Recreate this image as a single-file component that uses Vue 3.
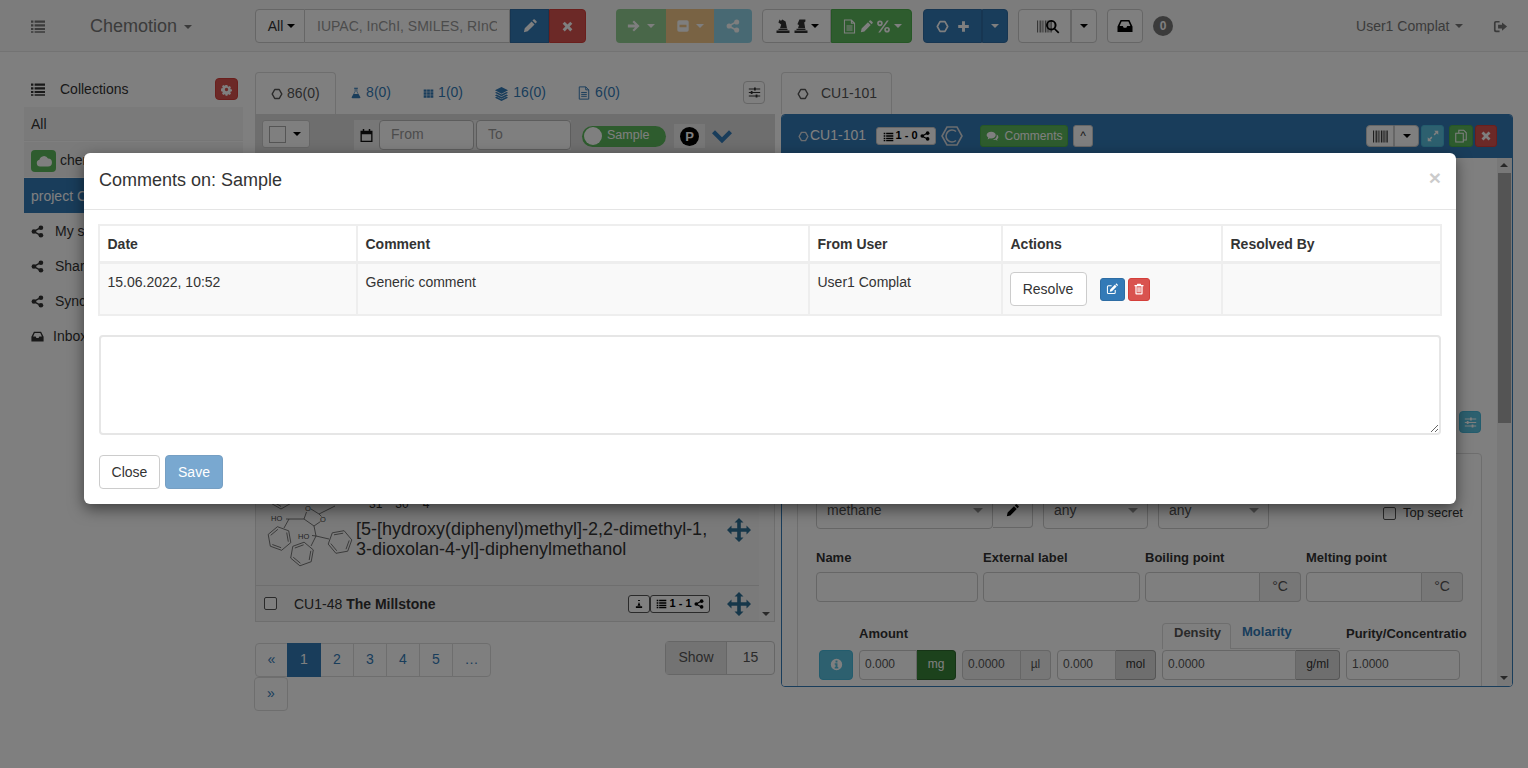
<script setup>
import { h } from 'vue'

const Ic = (props) =>
  h('svg', { class: 'i', viewBox: '0 0 16 16', width: props.s || 14, height: props.s || 14, fill: 'currentColor' }, [
    h('use', { href: '#' + props.n })
  ])
Ic.props = ['n', 's']

const hexPath = (cx, cy, r, rot) => {
  const p = (k, q) => {
    const a = ((rot + k * 60) * Math.PI) / 180
    return [cx + q * Math.cos(a), cy + q * Math.sin(a)].map((v) => v.toFixed(1)).join(' ')
  }
  let d = `M${p(0, r)}`
  for (let k = 1; k < 6; k++) d += `L${p(k, r)}`
  d += 'Z'
  for (let k = 0; k < 6; k += 2) d += `M${p(k, r * 0.78)}L${p(k + 1, r * 0.78)}`
  return d
}
const rings = [
  hexPath(279.5, 537.5, 12, 80),
  hexPath(302, 553, 12, 100),
  hexPath(340, 541, 12, 110),
  hexPath(281, 496, 12, 90)
]
const cols = ['Date', 'Comment', 'From User', 'Actions', 'Resolved By']
const pages = ['1', '2', '3', '4', '5', '…']
const sideRows = [
  { ic: 'share', t: 'My shared collections' },
  { ic: 'share', t: 'Shared with me' },
  { ic: 'share', t: 'Synchronized with me' },
  { ic: 'inbox', t: 'Inbox' }
]
const tabs = [
  { ic: 'flask', s: 12, t: '8(0)' },
  { ic: 'table', s: 11, t: '1(0)' },
  { ic: 'layers', s: 15, t: '16(0)' },
  { ic: 'file', s: 14, t: '6(0)' }
]
</script>

<template>
  <div class="page">
    <svg width="0" height="0" class="defs">
      <defs>
        <symbol id="list" viewBox="0 0 16 16"><path d="M1 2.5h2.4v2.2H1zM4.6 2.5H15v2.2H4.6zM1 6.2h2.4v2.2H1zM4.6 6.2H15v2.2H4.6zM1 9.9h2.4v2.2H1zM4.6 9.9H15v2.2H4.6zM1 13.2h2.4v1.6H1zM4.6 13.2H15v1.6H4.6z" /></symbol>
        <symbol id="pencil" viewBox="0 0 16 16"><path d="M1 15l1-4.4 7.8-7.8 3.4 3.4L5.4 14zM10.8 1.8L12 .6a1 1 0 0 1 1.4 0l2 2a1 1 0 0 1 0 1.4l-1.2 1.2z" /></symbol>
        <symbol id="times" viewBox="0 0 16 16"><path d="M4.6 2L8 5.4 11.4 2 14 4.6 10.6 8 14 11.4 11.4 14 8 10.6 4.6 14 2 11.4 5.4 8 2 4.6z" /></symbol>
        <symbol id="arrow" viewBox="0 0 16 16"><path d="M1 6.4h8.2L6.2 3.4 8 1.6 14.4 8 8 14.4l-1.8-1.8 3-3H1z" /></symbol>
        <symbol id="minus" viewBox="0 0 16 16"><path fill-rule="evenodd" d="M3.5 1.5h9a2 2 0 0 1 2 2v9a2 2 0 0 1-2 2h-9a2 2 0 0 1-2-2v-9a2 2 0 0 1 2-2zM4 6.6v2.8h8V6.6z" /></symbol>
        <symbol id="share" viewBox="0 0 16 16"><circle cx="3.6" cy="8" r="2.9" /><circle cx="12.2" cy="3.4" r="2.9" /><circle cx="12.2" cy="12.6" r="2.9" /><path d="M3 7l8.6-4.6.8 1.6L4 8.6zM4 7.4l8.4 4.6-.8 1.6L3 9z" /></symbol>
        <symbol id="hex" viewBox="0 0 16 16"><path fill="none" stroke="currentColor" stroke-width="2" stroke-linejoin="round" d="M5 2h6l3.4 6L11 14H5L1.6 8z" /></symbol>
        <symbol id="flask" viewBox="0 0 16 16"><path fill-rule="evenodd" d="M5.5 1h5v1.4h-.8v3.8l4 7.2c.5 1 0 1.6-1 1.6H3.3c-1 0-1.5-.6-1-1.6l4-7.2V2.4h-.8zM5.4 9.4h5.2L8.7 6V2.4H7.3V6z" /></symbol>
        <symbol id="table" viewBox="0 0 16 16"><path d="M1 2h4.2v3.4H1zM6 2h4v3.4H6zM10.8 2H15v3.4h-4.2zM1 6.2h4.2v3.6H1zM6 6.2h4v3.6H6zM10.8 6.2H15v3.6h-4.2zM1 10.6h4.2V14H1zM6 10.6h4V14H6zM10.8 10.6H15V14h-4.2z" /></symbol>
        <symbol id="layers" viewBox="0 0 16 16"><path d="M8 1l7 3.6L8 8.2 1 4.6zM1 7.2l1.8-.9L8 9l5.2-2.7 1.8.9L8 10.8zM1 10l1.8-.9L8 11.8l5.2-2.7L15 10l-7 3.6z" /><path d="M1 12.4l1.8-.9L8 14.2l5.2-2.7 1.8.9L8 16z" /></symbol>
        <symbol id="file" viewBox="0 0 16 16"><path fill="none" stroke="currentColor" stroke-width="1.1" d="M2.6 1H10l3.4 3.4V15H2.6zM10 1v3.4h3.4M4.8 7.4h6.4M4.8 9.6h6.4M4.8 11.8h6.4" /></symbol>
        <symbol id="cog" viewBox="0 0 16 16"><path fill-rule="evenodd" d="M6.6 1h2.8l.4 2 1.4.6 1.7-1.1 2 2-1.1 1.7.6 1.4 2 .4v2.8l-2 .4-.6 1.4 1.1 1.7-2 2-1.7-1.1-1.4.6-.4 2H6.6l-.4-2-1.4-.6-1.7 1.1-2-2 1.1-1.7-.6-1.4-2-.4V6.6l2-.4.6-1.4-1.1-1.7 2-2 1.7 1.1 1.4-.6zM8 5.4a2.6 2.6 0 1 0 0 5.2 2.6 2.6 0 0 0 0-5.2z" transform="translate(1.6 1.6) scale(.8)" /></symbol>
        <symbol id="cal" viewBox="0 0 16 16"><path fill-rule="evenodd" d="M4 1h1.6v2H10.4V1H12v2h2.4v12H1.6V3H4zM3 6.6V13.6h10V6.6z" /></symbol>
        <symbol id="cloud" viewBox="0 0 16 16"><path d="M4 13.5a3.4 3.4 0 0 1-.6-6.7A4.6 4.6 0 0 1 12 5.6a3.9 3.9 0 0 1 0 7.9z" /></symbol>
        <symbol id="inbox" viewBox="0 0 16 16"><path fill-rule="evenodd" d="M3.6 2h8.8L15.5 8.4V14H.5V8.4zM4.6 3.6L2.6 8h3.2l.9 1.8h2.6l.9-1.8h3.2l-2-4.4z" /></symbol>
        <symbol id="signout" viewBox="0 0 16 16"><path fill-rule="evenodd" d="M3 2h4v1.8H3.6a.8.8 0 0 0-.8.8v6.8c0 .4.4.8.8.8H7V14H3a2 2 0 0 1-2-2V4a2 2 0 0 1 2-2zM9.6 3.6L15 8l-5.4 4.4V10H5.4V6h4.2z" /></symbol>
        <symbol id="barcode" viewBox="0 0 16 16"><path d="M0 1.5h1v13H0zM2 1.5h.6v13H2zM3.4 1.5h1.2v13H3.4zM5.4 1.5H6v13h-.6zM7 1.5h.6v13H7zM8.6 1.5h1.4v13H8.6zM10.8 1.5h.6v13h-.6zM12.2 1.5h1v13h-1zM14 1.5h.6v13H14zM15.2 1.5h.8v13h-.8z" /></symbol>
        <symbol id="search" viewBox="0 0 16 16"><path fill-rule="evenodd" d="M6.6 1a5.6 5.6 0 0 1 4.5 9l4.2 4.2-1.3 1.3-4.2-4.2A5.6 5.6 0 1 1 6.6 1zm0 2a3.6 3.6 0 1 0 0 7.2 3.6 3.6 0 0 0 0-7.2z" /></symbol>
        <symbol id="edit" viewBox="0 0 16 16"><path d="M7.5 3H3.2A2 2 0 0 0 1.2 5v7.8a2 2 0 0 0 2 2H11a2 2 0 0 0 2-2V9.4h-1.4v3.2c0 .5-.4.8-.8.8H3.4a.8.8 0 0 1-.8-.8V5.2c0-.4.4-.8.8-.8h4.1zM5 11.6l.6-3L11.8 2.4l2.4 2.4L8 11zM12.6 1.6l.7-.7c.3-.3.8-.3 1.1 0l1.3 1.3c.3.3.3.8 0 1.1l-.7.7z" /></symbol>
        <symbol id="trash" viewBox="0 0 16 16"><path fill-rule="evenodd" d="M5.8 1h4.4l.8 1.8h3v1.6h-1.2V14a1.2 1.2 0 0 1-1.2 1.2H4.4A1.2 1.2 0 0 1 3.2 14V4.4H2V2.8h3zM4.8 4.4V13.6h6.4V4.4zM6 5.8h1v6.6H6zM7.5 5.8h1v6.6h-1zM9 5.8h1v6.6H9z" /></symbol>
        <symbol id="move" viewBox="0 0 16 16"><path d="M8 0l3 3H9.2v3.8H13V5l3 3-3 3V9.2H9.2V13H11l-3 3-3-3h1.8V9.2H3V11L0 8l3-3v1.8h3.8V3H5z" /></symbol>
        <symbol id="chev" viewBox="0 0 16 16"><path d="M2.4 3.4L8 9l5.6-5.6L16 5.8l-8 8-8-8z" /></symbol>
        <symbol id="sliders" viewBox="0 0 16 16"><path d="M1 3h6.4V1.8h2.2V3H15v1.4H9.6v1.2H7.4V4.4H1zM1 7.3h2.4V6.1h2.2v1.2H15v1.4H5.6v1.2H3.4V8.7H1zM1 11.6h8.4v-1.2h2.2v1.2H15V13h-3.4v1.2H9.4V13H1z" /></symbol>
        <symbol id="comments" viewBox="0 0 16 16"><path d="M6.4 2C9.6 2 12 3.8 12 6.2s-2.4 4.2-5.6 4.2c-.6 0-1.1 0-1.6-.2L2 11.6l.8-2.4C1.6 8.4.8 7.4.8 6.2.8 3.8 3.2 2 6.4 2z" /><path d="M13 5.6c1.4.7 2.2 1.8 2.2 3 0 1.1-.6 2-1.6 2.7l.6 2-2.4-1.2c-1 .2-2.6.2-3.6-.4 2.6-.2 4.8-2 5-4.4z" /></symbol>
        <symbol id="expand" viewBox="0 0 16 16"><path d="M15 1v5.4l-2-2-2.8 2.8-1.4-1.4L11.6 3l-2-2zM1 15V9.6l2 2 2.8-2.8 1.4 1.4L4.4 13l2 2z" /></symbol>
        <symbol id="copy" viewBox="0 0 16 16"><path fill="none" stroke="currentColor" stroke-width="1.2" d="M5.5 4.8V1.4h5.6l2.9 2.9v8.3h-3.5M2 4.8h8.6v10H2z" /></symbol>
        <symbol id="info" viewBox="0 0 16 16"><path fill-rule="evenodd" d="M8 1a7 7 0 1 1 0 14A7 7 0 0 1 8 1zM6.8 3v2.4h2.4V3zM5.8 6.6v1.6h1v3H5.8v1.6h4.4v-1.6h-1V6.6z" /></symbol>
        <symbol id="rxa" viewBox="0 0 16 16"><path d="M1.5 12.6h13V15h-13zM3.5 10.8h9v1.2h-9zM5 10.2l1.2-3.8L3.4 4.6 4.6 1.6 6 3 7.2 1.4l3.4 2.2 1.4 6.6z" /></symbol>
        <symbol id="rxb" viewBox="0 0 16 16"><path d="M1.5 12.6h13V15h-13zM3.5 10.8h9v1.2h-9zM5 10.2l1-3.2-1.6-.8L6.4 1.6h6v2l-1.2 1 1 5.6z" /></symbol>
        <symbol id="percent" viewBox="0 0 16 16"><path fill-rule="evenodd" d="M4.2 1.6a3 3 0 1 1 0 6 3 3 0 0 1 0-6zm0 1.8a1.2 1.2 0 1 0 0 2.4 1.2 1.2 0 0 0 0-2.4zM11.8 8.4a3 3 0 1 1 0 6 3 3 0 0 1 0-6zm0 1.8a1.2 1.2 0 1 0 0 2.4 1.2 1.2 0 0 0 0-2.4zM11.6 1.6h2L4.4 14.4h-2z" /></symbol>
        <symbol id="plus" viewBox="0 0 16 16"><path d="M6.2 1.5h3.6v4.7h4.7v3.6H9.8v4.7H6.2V9.8H1.5V6.2h4.7z" /></symbol>
        <symbol id="tuser" viewBox="0 0 16 16"><path d="M8 4.6L10.4 10.8H5.6zM6.6 1.6h2.8v1.4H6.6zM3 11.6h10v2.6H3z" /></symbol>
      </defs>
    </svg>

    <header class="nav">
      <Ic n="list" s="16" class="nav-list" />
      <span class="brand">Chemotion</span><span class="caret brand-caret"></span>

      <div class="grp search">
        <button class="btn all">All <span class="caret dark"></span></button>
        <input class="search-in" placeholder="IUPAC, InChI, SMILES, RInChI" />
        <button class="btn primary s39"><Ic n="pencil" s="14" /></button>
        <button class="btn danger s37"><Ic n="times" s="13" /></button>
      </div>

      <div class="grp g-ops">
        <button class="btn success off w50"><Ic n="arrow" s="14" /><span class="caret"></span></button>
        <button class="btn warning off w48"><Ic n="minus" s="14" /><span class="caret"></span></button>
        <button class="btn info off w38"><Ic n="share" s="14" /></button>
      </div>

      <div class="grp g-gen">
        <button class="btn w69"><Ic n="rxa" s="16" /><Ic n="rxb" s="16" /><span class="caret dark"></span></button>
        <button class="btn success w81"><Ic n="file" s="15" /><Ic n="pencil" s="13" /><Ic n="percent" s="15" /><span class="caret"></span></button>
      </div>

      <div class="grp g-add">
        <button class="btn primary w59"><Ic n="hex" s="13" /><Ic n="plus" s="13" /></button>
        <button class="btn primary w26"><span class="caret"></span></button>
      </div>

      <div class="grp g-bar">
        <button class="btn w53 barq"><Ic n="barcode" s="15" class="bc" /><Ic n="search" s="15" class="mag" /></button>
        <button class="btn w26"><span class="caret dark"></span></button>
      </div>

      <button class="btn w36 solo"><Ic n="inbox" s="16" /></button>
      <span class="badge">0</span>

      <span class="user">User1 Complat</span><span class="caret user-caret"></span>
      <Ic n="signout" s="15" class="signout" />
    </header>

    <main class="main">
      <aside class="side">
        <div class="side-head">
          <Ic n="list" s="16" />
          <span class="side-title">Collections</span>
          <button class="btn danger cog"><Ic n="cog" s="13" /></button>
        </div>
        <div class="side-row all-row">All</div>
        <div class="side-row chem-row"><span class="cloud"><Ic n="cloud" s="16" /></span>chemotion-repository.net</div>
        <div class="side-row proj-row">project Complat</div>
        <div v-for="r in sideRows" :key="r.t" class="side-row plain">
          <Ic :n="r.ic" s="13" /><span>{{ r.t }}</span>
        </div>
      </aside>

      <section class="center">
        <div class="tabs">
          <div class="tab active"><Ic n="hex" s="12" /><span>86(0)</span></div>
          <div v-for="t in tabs" :key="t.ic" class="tab" :class="'t-' + t.ic">
            <Ic :n="t.ic" :s="t.s" /><span>{{ t.t }}</span>
          </div>
          <button class="btn tune"><Ic n="sliders" s="13" /></button>
        </div>

        <div class="toolbar">
          <div class="check-dd"><span class="chk-box"></span><span class="caret dark"></span></div>
          <div class="date-grp">
            <span class="cal"><Ic n="cal" s="15" /></span>
            <span class="fake-in">From</span>
            <span class="fake-in to">To</span>
          </div>
          <div class="toggle"><span class="knob"></span><span>Sample</span></div>
          <span class="pbox"><span class="pcirc">P</span></span>
          <Ic n="chev" s="20" class="chev" />
        </div>

        <div class="list">
          <div class="list-main">
            <div class="mol-row">
              <svg class="mol" width="95" height="105" viewBox="262 480 95 105" fill="none" stroke="#555" stroke-width=".8">
                <path v-for="d in rings" :key="d" :d="d" />
                <path d="M284 527L289 518L304 518L306.5 511M311 508L319 513L321.5 515.5M320.5 520.5L314 525L304 518M314 525L316 535L329 538M316 535L311 545M316 535L312 534.5M289 518L286 518M319 513L335 505" />
                <text x="271" y="520" class="lbl">HO</text>
                <text x="298" y="538" class="lbl">HO</text>
                <text x="305" y="510" class="lbl">O</text>
                <text x="320" y="521" class="lbl">O</text>
              </svg>
              <div class="mol-text">
                <div class="formula">C<sub>31</sub>H<sub>30</sub>O<sub>4</sub></div>
                <div class="iupac">[5-[hydroxy(diphenyl)methyl]-2,2-dimethyl-1,<br />3-dioxolan-4-yl]-diphenylmethanol</div>
              </div>
              <Ic n="move" s="24" class="move mv1" />
            </div>
            <div class="item-row">
              <span class="cb"></span>
              <span class="item-name">CU1-48 <b>The Millstone</b></span>
              <span class="tag flask-tag"><Ic n="tuser" s="10" /></span>
              <span class="tag list-tag"><Ic n="list" s="11" />1 - 1<Ic n="share" s="10" /></span>
              <Ic n="move" s="24" class="move" />
            </div>
          </div>
          <div class="list-scroll"><span class="arr-down"></span></div>
        </div>

        <div class="foot">
          <div class="pager">
            <span class="pg first">«</span>
            <span v-for="(p, idx) in pages" :key="p" class="pg" :class="{ cur: idx === 0, wide: p === '…' }">{{ p }}</span>
            <span class="pg last">»</span>
          </div>
          <div class="show"><span class="show-l">Show</span><span class="show-v">15</span></div>
        </div>
      </section>

      <section class="right">
        <div class="tabs">
          <div class="tab active rtab"><Ic n="hex" s="12" /><span>CU1-101</span></div>
        </div>
        <div class="panel">
          <div class="panel-head">
            <Ic n="hex" s="11" class="ph-hex" />
            <span class="ph-title">CU1-101</span>
            <span class="tag head-tag"><Ic n="list" s="11" />1 - 0<Ic n="share" s="10" /></span>
            <svg class="chem-hex" width="22" height="20" viewBox="0 0 22 20" fill="none" stroke="#d6dbe0" stroke-width="1.6"><path d="M6 1h10l5 9-5 9H6L1 10z" /><path d="M15 5.5A6 6 0 1 0 15 14.5" /></svg>
            <button class="btn success mini comm"><Ic n="comments" s="13" /><span>Comments</span></button>
            <button class="btn mini up">^</button>
            <div class="grp ph-bar">
              <button class="btn mini w28"><Ic n="barcode" s="15" /></button>
              <button class="btn mini w25"><span class="caret dark"></span></button>
            </div>
            <button class="btn info mini w23"><Ic n="expand" s="12" /></button>
            <button class="btn success mini w24 cp"><Ic n="copy" s="14" /></button>
            <button class="btn danger mini w22"><Ic n="times" s="12" /></button>
          </div>

          <div class="panel-body">
            <div class="content">
              <div class="tune-row"><button class="btn info tune2"><Ic n="sliders" s="13" /></button></div>
              <div class="box">
                <div class="r-type">
                  <span class="sel w177">methane<i class="caret grey"></i></span>
                  <span class="pen"><Ic n="pencil" s="13" /></span>
                  <span class="sel w105">any<i class="caret grey"></i></span>
                  <span class="sel w111">any<i class="caret grey"></i></span>
                  <label class="secret"><span class="cb"></span>Top secret</label>
                </div>
                <div class="r-labels">
                  <label class="w167">Name</label>
                  <label class="w162">External label</label>
                  <label class="w161">Boiling point</label>
                  <label>Melting point</label>
                </div>
                <div class="r-inputs">
                  <span class="ctl w162"></span>
                  <span class="ctl w157"></span>
                  <span class="ig w156"><span class="ctl fx"></span><span class="addon">°C</span></span>
                  <span class="ig w157"><span class="ctl fx"></span><span class="addon">°C</span></span>
                </div>
                <div class="r-amount-l">
                  <label class="amt">Amount</label>
                  <div class="dtabs"><span class="dtab on">Density</span><span class="dtab link">Molarity</span></div>
                  <label class="pur">Purity/Concentration</label>
                </div>
                <div class="r-amount">
                  <button class="btn info infob"><Ic n="info" s="13" /></button>
                  <span class="ig w97"><span class="ctl fx">0.000</span><span class="addon grn">mg</span></span>
                  <span class="ig w88 dis"><span class="ctl fx">0.0000</span><span class="addon">µl</span></span>
                  <span class="ig w99"><span class="ctl fx">0.000</span><span class="addon gr2">mol</span></span>
                  <span class="ig w178"><span class="ctl fx">0.0000</span><span class="addon gr2">g/ml</span></span>
                  <span class="ctl w114">1.0000</span>
                </div>
              </div>
            </div>
            <div class="vscroll"><span class="arr-up"></span><span class="thumb"></span><span class="fill"></span><span class="arr-dn"></span></div>
          </div>
        </div>
      </section>
    </main>

    <div class="backdrop"></div>
    <div class="modal-wrap">
      <div class="modal">
        <div class="m-head">
          <h4>Comments on: Sample</h4>
          <span class="m-close">×</span>
        </div>
        <div class="m-body">
          <table class="tbl">
            <thead>
              <tr><th v-for="c in cols" :key="c">{{ c }}</th></tr>
            </thead>
            <tbody>
              <tr>
                <td>15.06.2022, 10:52</td>
                <td>Generic comment</td>
                <td>User1 Complat</td>
                <td class="act">
                  <button class="btn res">Resolve</button>
                  <button class="btn primary xs ed"><Ic n="edit" s="12" /></button>
                  <button class="btn danger xs tr"><Ic n="trash" s="12" /></button>
                </td>
                <td></td>
              </tr>
            </tbody>
          </table>
          <textarea class="ta"></textarea>
          <div class="m-actions">
            <button class="btn close-b">Close</button>
            <button class="btn primary off save">Save</button>
          </div>
        </div>
      </div>
    </div>
  </div>
</template>

<style>
html, body { margin: 0; height: 100%; overflow: hidden; background: #fff; }
</style>

<style scoped>
* { box-sizing: border-box; }
.defs { position: absolute; }
.page { position: relative; width: 1528px; height: 768px; overflow: hidden; font: 14px/1.42857 "Liberation Sans", Arial, sans-serif; color: #333; background: #fff; }
.i { display: block; flex: none; }

.btn { display: inline-flex; align-items: center; justify-content: center; gap: 4px; height: 34px; padding: 0; font: 14px "Liberation Sans", sans-serif; color: #333; background: #fff; border: 1px solid #ccc; border-radius: 4px; }
.primary { background: #337ab7; border-color: #2e6da4; color: #fff; }
.danger { background: #d9534f; border-color: #d43f3a; color: #fff; }
.success { background: #5cb85c; border-color: #4cae4c; color: #fff; }
.warning { background: #f0ad4e; border-color: #eea236; color: #fff; }
.info { background: #5bc0de; border-color: #46b8da; color: #fff; }
.off { opacity: .65; }
.caret { display: inline-block; width: 0; height: 0; border-top: 4px solid; border-left: 4px solid transparent; border-right: 4px solid transparent; }
.caret.dark { color: #000; }
.grp { display: flex; flex: none; }
.grp .btn { border-radius: 0; }
.grp .btn:first-child { border-radius: 4px 0 0 4px; }
.grp .btn:last-child { border-radius: 0 4px 4px 0; }

.nav { display: flex; align-items: center; height: 52px; padding: 1px 0 0 30px; background: #f8f8f8; border-bottom: 1px solid #e7e7e7; }
.nav-list { color: #777; }
.brand { margin: 2px 0 0 44px; font-size: 18px; color: #777; }
.brand-caret { margin-left: 7px; color: #777; margin-top: 2px; }
.search { margin-left: 63px; height: 34px; }
.all { width: 50px; gap: 4px; padding-left: 3px; }
.search-in { width: 205px; height: 34px; padding: 0 12px; font: 14px "Liberation Sans", sans-serif; border: 1px solid #ccc; border-left: 0; outline: 0; background: #fff; color: #555; }
.search-in::placeholder { color: #999; opacity: 1; }
.s39 { width: 39px; }
.s37 { width: 37px; }
.g-ops { margin-left: 30px; }
.w50 { width: 50px; } .w48 { width: 48px; } .w38 { width: 38px; }
.g-ops .btn { border: 0; gap: 6px; }
.g-gen { margin-left: 10px; }
.w69 { width: 69px; gap: 2px; } .w81 { width: 81px; gap: 3px; }
.g-add { margin-left: 11px; }
.w59 { width: 59px; gap: 8px; } .w26 { width: 26px; }
.g-bar { margin-left: 10px; }
.w53 { width: 53px; }
.barq { gap: 0; padding-left: 8px; }
.bc { color: #666; margin-right: -7px; }
.mag { color: #000; }
.solo { width: 36px; margin-left: 10px; color: #000; }
.badge { margin-left: 10px; min-width: 20px; height: 20px; padding: 0 6px; border-radius: 10px; background: #777; color: #fff; font-size: 12px; font-weight: 700; line-height: 20px; text-align: center; }
.user { margin: 2px 0 0 183px; color: #777; }
.user-caret { margin-left: 6px; color: #777; }
.signout { margin-left: 30px; color: #777; }

.main { display: flex; align-items: flex-start; padding: 20px 0 0 24px; }
.side { flex: none; width: 219px; }
.side-head { display: flex; align-items: center; height: 35px; padding: 0 5px 1px 6px; }
.side-title { margin-left: 14px; flex: 1; padding-top: 1px; }
.cog { width: 23px; height: 22px; }
.side-row { display: flex; align-items: center; height: 35px; margin-bottom: 1px; padding: 2px 0 0 7px; white-space: nowrap; overflow: hidden; }
.all-row { height: 34px; background: #f5f5f5; border-bottom: 1px solid #eee; }
.chem-row { background: #f5f5f5; }
.cloud { display: flex; align-items: center; justify-content: center; width: 25px; height: 22px; margin-right: 4px; background: #5cb85c; color: #fff; border-radius: 4px; }
.proj-row { background: #337ab7; color: #fff; }
.plain { gap: 11px; margin: 0; padding-top: 0; }
.plain:last-child { gap: 9px; }

.center { flex: none; width: 520px; margin-left: 12px; }
.tabs { display: flex; align-items: center; height: 42px; }
.tab { display: flex; align-items: center; gap: 4px; height: 42px; padding: 0 15px; color: #337ab7; white-space: nowrap; }
.tab.active { color: #555; background: #fff; border: 1px solid #ddd; border-bottom: 0; border-radius: 4px 4px 0 0; padding: 0 15px; width: 81px; }
.t-flask { width: 55px; justify-content: flex-end; padding: 0; }
.t-table { width: 72px; justify-content: flex-end; padding: 0; }
.t-layers { width: 83px; justify-content: flex-end; padding: 0; }
.t-file { width: 74px; justify-content: flex-end; padding: 0; }
.tune { width: 22px; height: 23px; margin: 0 10px 1px auto; }
.tab.rtab { width: 111px; gap: 12px; padding: 0 10px 0 15px; }

.toolbar { position: relative; display: flex; align-items: center; height: 39px; padding: 0 0 0 7px; background: #ddd; }
.check-dd { display: flex; align-items: center; width: 48px; height: 28px; margin-top: 1px; padding-left: 6px; gap: 7px; background: #fff; border: 1px solid #ccc; border-radius: 3px; }
.chk-box { width: 17px; height: 17px; border: 1px solid #aaa; background: #fff; }
.date-grp { display: flex; height: 30px; margin: 3px 0 0 44px; background: #eee; }
.cal { display: flex; align-items: center; justify-content: center; width: 25px; color: #111; }
.fake-in { display: flex; align-items: center; width: 95px; padding-left: 11px; background: #fff; border: 1px solid #bbb; border-radius: 4px; font-size: 14px; color: #999; }
.fake-in.to { margin-left: 2px; }
.toggle { display: flex; align-items: center; gap: 5px; width: 84px; height: 21px; margin: 5px 0 0 11px; padding-left: 2px; background: #5cb85c; border-radius: 11px; color: #fff; font-size: 12.5px; }
.knob { width: 18px; height: 18px; border-radius: 50%; background: #fff; }
.pbox { display: flex; align-items: center; justify-content: center; width: 31px; height: 24px; margin: 5px 0 0 8px; background: #eee; }
.pcirc { width: 19px; height: 19px; border-radius: 50%; background: #000; color: #fff; font-size: 13px; font-weight: 700; line-height: 19px; text-align: center; }
.chev { margin: 4px 0 0 7px; color: #337ab7; }

.list { display: flex; height: 469px; border: 1px solid #ddd; border-top: 0; background: #fff; }
.list-main { flex: 1; display: flex; flex-direction: column; justify-content: flex-end; }
.list-scroll { position: relative; width: 15px; background: #f8f8f8; }
.arr-down { position: absolute; bottom: 5px; left: 3px; border-top: 4px solid #555; border-left: 4px solid transparent; border-right: 4px solid transparent; }
.mol-row { display: flex; height: 105px; background: #f5f5f5; border-bottom: 1px solid #ddd; }
.mol { margin-left: 6px; flex: none; }
.lbl { font: 7.5px "Liberation Sans", sans-serif; fill: #444; stroke: none; }
.mol-text { width: 370px; margin-left: -1px; padding-top: 7px; font-size: 18px; line-height: 19.6px; }
.formula { height: 32px; }
.formula sub { font-size: 12px; line-height: 0; }
.iupac { white-space: nowrap; }
.move { color: #2d6f94; }
.mv1 { margin: 37px 0 0 1px; }
.item-row { display: flex; align-items: center; height: 35px; padding: 0 8px; background: #f5f5f5; }
.cb { display: inline-block; width: 13px; height: 13px; flex: none; background: #fff; border: 1px solid #555; border-radius: 2px; }
.item-name { flex: 1; margin: 2px 0 0 17px; }
.tag { display: inline-flex; align-items: center; justify-content: center; gap: 2px; height: 18px; font-size: 11px; font-weight: 700; color: #000; background: #fff; border: 1px solid #555; border-radius: 3px; }
.flask-tag { width: 22px; }
.list-tag { width: 60px; margin-right: 17px; }
.foot { display: flex; justify-content: space-between; margin-top: 19px; align-items: flex-start; }
.pager { display: flex; flex-wrap: wrap; width: 240px; padding-top: 2px; }
.pg { display: flex; align-items: center; justify-content: center; width: 34px; height: 34px; color: #337ab7; background: #fff; border: 1px solid #ddd; margin-left: -1px; }
.pg.first { width: 33px; margin-left: 0; border-radius: 4px 0 0 4px; }
.pg.cur { width: 34px; position: relative; background: #337ab7; border-color: #337ab7; color: #fff; }
.pg.wide { width: 39px; border-radius: 0 4px 4px 0; }
.pg.last { margin-left: -1px; border-radius: 4px; font-size: 14px; }
.show { display: flex; width: 110px; height: 34px; border: 1px solid #ccc; border-radius: 4px; }
.show-l { display: flex; align-items: center; justify-content: center; width: 61px; background: #e6e6e6; border-right: 1px solid #ccc; color: #555; }
.show-v { flex: 1; display: flex; align-items: center; justify-content: center; color: #555; }

.right { flex: none; width: 732px; margin-left: 6px; }
.panel { height: 573px; border: 1px solid #337ab7; border-radius: 4px; overflow: hidden; display: flex; flex-direction: column; }
.panel-head { display: flex; align-items: center; flex: none; height: 43px; padding: 0 15px 1px 16px; background: #337ab7; color: #fff; }
.ph-hex { color: #d6dbe0; }
.ph-title { margin-left: 1px; }
.head-tag { width: 60px; margin-left: 10px; background: #fff; border-color: #ccc; }
.chem-hex { margin-left: 5px; }
.mini { height: 22px; font-size: 12px; border-radius: 3px; }
.comm { width: 88px; margin-left: 17px; gap: 6px; }
.up { width: 20px; margin-left: 5px; font-size: 12px; color: #333; }
.ph-bar { margin-left: auto; }
.w28 { width: 28px; } .w25 { width: 25px; }
.w23 { width: 23px; margin-left: 2px; }
.w24 { width: 24px; margin-left: 5px; }
.cp { background: #5cb85c; }
.w22 { width: 22px; margin-left: 2px; }

.panel-body { flex: 1; display: flex; min-height: 0; background: #fff; }
.content { flex: 1; min-width: 0; overflow: hidden; padding-left: 15px; }
.tune-row { display: flex; justify-content: flex-end; height: 295px; padding: 253px 16px 0 0; }
.tune2 { width: 22px; height: 22px; }
.box { width: 685px; height: 300px; padding-left: 18px; border: 1px solid #ddd; border-radius: 4px 4px 0 0; }
.r-type { display: flex; align-items: flex-start; height: 100px; padding-top: 39px; }
.sel { position: relative; display: flex; align-items: center; height: 36px; padding-left: 10px; background: #fff; border: 1px solid #ccc; border-radius: 4px; color: #555; }
.caret.grey { position: absolute; right: 9px; top: 14px; color: #999; border-top-width: 5px; border-left-width: 5px; border-right-width: 5px; }
.w177 { width: 177px; } .w105 { width: 105px; margin-left: 10px; } .w111 { width: 111px; margin-left: 10px; }
.pen { display: flex; align-items: center; justify-content: center; width: 40px; height: 35px; background: #fff; border: 1px solid #ccc; border-left: 0; border-radius: 0 4px 4px 0; color: #000; }
.secret { display: flex; align-items: center; gap: 7px; margin: 11px 0 0 114px; font-size: 13px; color: #333; }
.r-labels { display: flex; height: 19px; font-size: 13px; font-weight: 700; align-items: center; margin-top: -5px; }
.r-labels label { flex: none; }
.w167 { width: 167px; } .w162 { width: 162px; } .w161 { width: 161px; }
.r-inputs { display: flex; gap: 5px; height: 30px; margin-top: 4px; }
.ctl { display: flex; align-items: center; height: 30px; padding-left: 5px; background: #fff; border: 1px solid #ccc; border-radius: 4px; font-size: 12px; color: #555; flex: none; }
.w157 { width: 157px; } .w156 { width: 156px; }
.ig { display: flex; flex: none; height: 30px; }
.ig .ctl { border-radius: 4px 0 0 4px; }
.fx { flex: 1; min-width: 0; }
.addon { display: flex; align-items: center; justify-content: center; padding: 0 10px; background: #eee; border: 1px solid #ccc; border-left: 0; border-radius: 0 4px 4px 0; font-size: 12px; color: #555; }
.w156 .addon, .w157 .addon { width: 41px; padding: 0; font-size: 14px; }
.r-amount-l { position: relative; display: flex; height: 26px; margin-top: 21px; font-size: 13px; font-weight: 700; }
.amt { margin: 2px 0 0 43px; }
.dtabs { display: flex; position: absolute; left: 346px; top: 0; width: 178px; height: 26px; border-bottom: 1px solid #ddd; }
.dtab { display: flex; align-items: center; height: 26px; padding: 0 11px 7px; }
.dtab.on { width: 69px; background: #fff; border: 1px solid #ddd; border-bottom: 0; border-radius: 4px 4px 0 0; color: #555; }
.dtab.link { color: #337ab7; }
.pur { position: absolute; left: 530px; top: 2px; width: 121px; overflow: hidden; white-space: nowrap; }
.r-amount { display: flex; align-items: center; height: 31px; }
.infob { width: 34px; height: 30px; margin-left: 3px; }
.w97 { width: 97px; margin-left: 6px; } .w88 { width: 89px; margin-left: 6px; } .w99 { width: 99px; margin-left: 6px; } .w178 { width: 178px; margin-left: 6px; }
.w114 { width: 114px; margin-left: 6px; }
.dis .ctl { background: #eee; }
.grn { width: 39px; padding: 0; background: #398439; border-color: #2d672d; color: #fff; }
.w88 .addon { width: 30px; padding: 0; }
.gr2 { width: 40px; padding: 0; background: #ddd; border-color: #aaa; color: #333; }
.w178 .gr2 { width: 44px; }
.vscroll { position: relative; display: flex; flex-direction: column; flex: none; width: 15px; background: #f1f1f1; }
.arr-up { height: 15px; position: relative; }
.arr-up::after { content: ""; position: absolute; left: 3px; top: 5px; border-bottom: 4px solid #505050; border-left: 4px solid transparent; border-right: 4px solid transparent; }
.thumb { width: 13px; height: 250px; margin-left: 1px; background: #a8a8a8; }
.fill { flex: 1; }
.arr-dn { position: relative; height: 15px; }
.arr-dn::after { content: ""; position: absolute; left: 3px; top: 5px; border-top: 4px solid #505050; border-left: 4px solid transparent; border-right: 4px solid transparent; }

.backdrop { position: absolute; inset: 0; background: #000; opacity: .5; }
.modal-wrap { position: absolute; inset: 0; }
.modal { width: 1372px; margin: 153px 0 0 84px; background: #fff; border-radius: 6px; box-shadow: 0 5px 15px rgba(0, 0, 0, .5); }
.m-head { display: flex; justify-content: space-between; height: 57px; padding: 15px; border-bottom: 1px solid #e5e5e5; }
h4 { margin: 0; font-size: 18px; font-weight: 500; line-height: 25.7px; color: #333; }
.m-close { font-size: 21px; font-weight: 700; line-height: 20px; color: #000; opacity: .2; }
.m-body { padding: 15px; }
.tbl { width: 1344px; margin: -1px 0 0 -1px; table-layout: fixed; border-collapse: collapse; }
.tbl th, .tbl td { padding: 8px 8px 8px 7.5px; text-align: left; vertical-align: top; border: 2px solid #eee; }
.tbl th { height: 37px; padding-bottom: 6px; vertical-align: bottom; border-bottom-width: 3px; }
.tbl td { padding-top: 9px; }
.tbl td.act { padding: 8px 8px 8px 6.5px; }
.tbl th:nth-child(1) { width: 258px; } .tbl th:nth-child(2) { width: 452px; } .tbl th:nth-child(3) { width: 193px; } .tbl th:nth-child(4) { width: 220px; }
.tbl tbody tr { background: #f9f9f9; }
.tbl td { height: 52px; }
.act { white-space: nowrap; }
.act .btn { vertical-align: top; }
.res { width: 77px; }
.xs { height: 23px; border-radius: 3px; margin-top: 6px; }
.ed { width: 25px; margin-left: 13px; }
.tr { width: 22px; margin-left: 3px; }
.ta { display: block; width: 1342px; height: 100px; margin: 19px 0 20px; border: 2px solid #e6e6e6; border-radius: 4px; resize: both; outline: 0; background: #fff; }
.m-actions { display: flex; gap: 5px; }
.close-b { width: 61px; }
.save { width: 58px; }
</style>
